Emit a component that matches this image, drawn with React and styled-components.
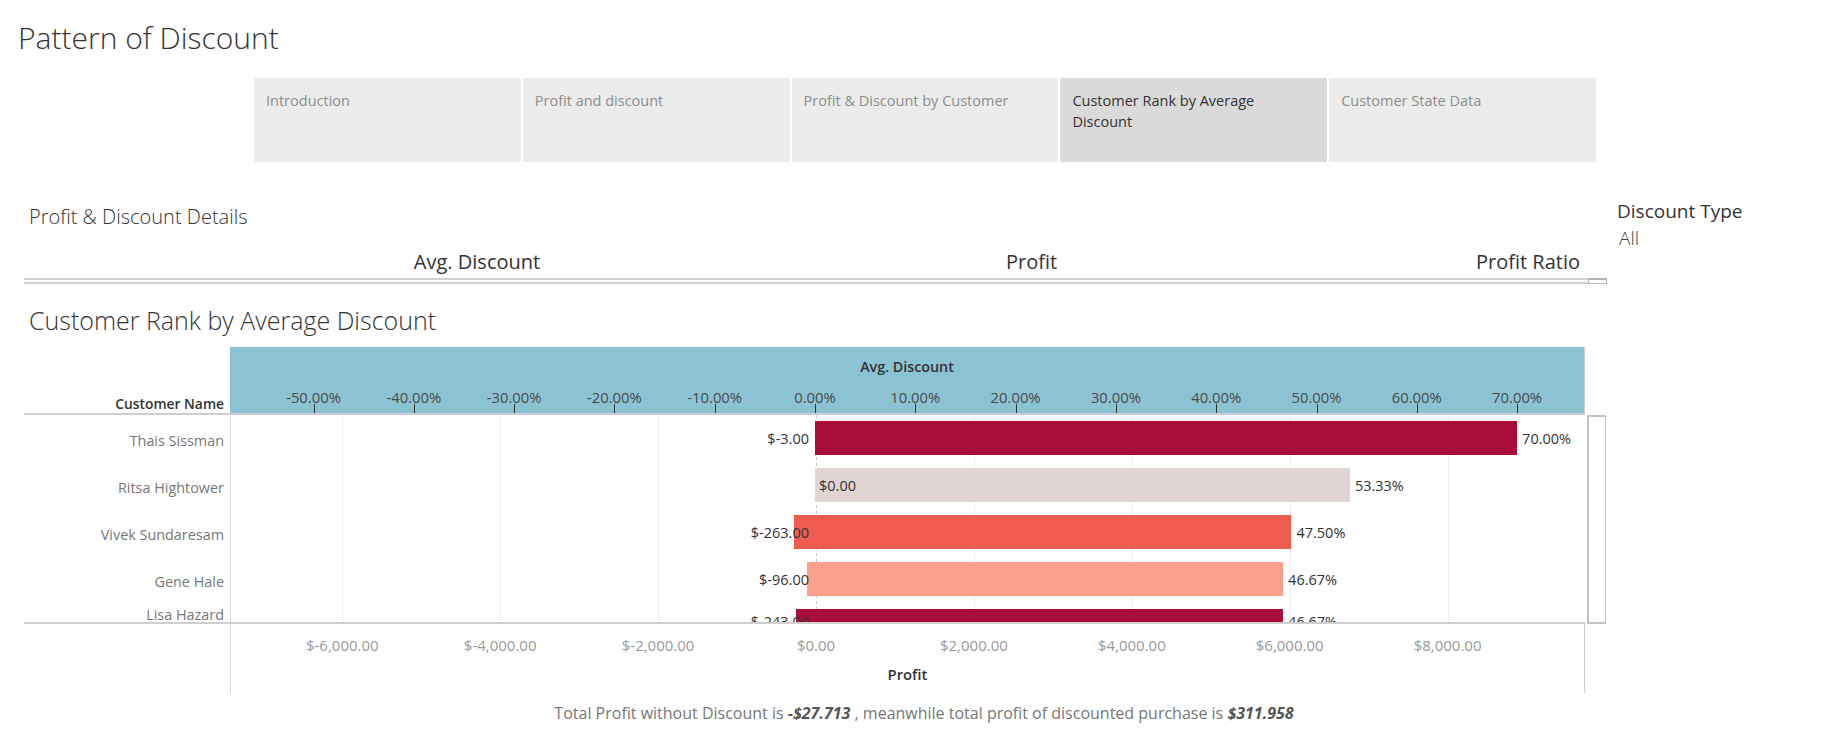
import styled, { createGlobalStyle } from 'styled-components';

const GlobalStyle = createGlobalStyle`
  html, body {
    margin: 0;
    padding: 0;
    background: #fff;
  }
  body {
    font-family: 'Open Sans', 'Noto Sans', sans-serif;
    color: #333;
  }
`;

// chart scale, in px inside the plot column
const ZERO = 585;
const PER_PCT = 10.03;
const PER_DOLLAR = 157.9 / 2000;
const PLOT_W = 1355;

const pctX = (d) => ZERO + d * PER_PCT;
const profitX = (p) => ZERO + p * PER_DOLLAR;

const customers = [
  { name: 'Thais Sissman', profit: -3, disc: 70, color: '#a90e3a', label: '$-3.00', pct: '70.00%' },
  { name: 'Ritsa Hightower', profit: 0, disc: 53.33, color: '#e0d5d3', label: '$0.00', pct: '53.33%' },
  { name: 'Vivek Sundaresam', profit: -263, disc: 47.5, color: '#f05d50', label: '$-263.00', pct: '47.50%' },
  { name: 'Gene Hale', profit: -96, disc: 46.67, color: '#fca08b', label: '$-96.00', pct: '46.67%' },
  { name: 'Lisa Hazard', profit: -243, disc: 46.67, color: '#a90e3a', label: '$-243.00', pct: '46.67%' },
];

const discTicks = [-50, -40, -30, -20, -10, 0, 10, 20, 30, 40, 50, 60, 70];
const profitTicks = [-6000, -4000, -2000, 0, 2000, 4000, 6000, 8000];

const tabs = [
  'Introduction',
  'Profit and discount',
  'Profit & Discount by Customer',
  'Customer Rank by Average Discount',
  'Customer State Data',
];

const Page = styled.div`
  width: 1848px;
  height: 743px;
  overflow: hidden;
  display: flex;
  flex-direction: column;
`;

const Title = styled.h1`
  margin: 21px 0 0 18px;
  font-size: 30px;
  font-weight: 300;
  line-height: 34px;
  color: #333;
`;

const TabBar = styled.nav`
  margin: 23px 0 0 254px;
  width: 1342px;
  height: 84px;
  display: grid;
  grid-template-columns: repeat(5, 1fr);
  gap: 2px;
`;

const Tab = styled.div`
  background: ${({ $active }) => ($active ? '#dadada' : '#ececec')};
  color: ${({ $active }) => ($active ? '#333' : '#8e8e8e')};
  padding: 12px 30px 0 12px;
  font-size: 14.5px;
  line-height: 21px;
`;

const Main = styled.div`
  margin-top: 39px;
  display: flex;
  align-items: flex-start;
`;

const Dashboard = styled.section`
  margin-left: 24px;
  width: 1583px;
  display: flex;
  flex-direction: column;
`;

const SectionHeading = styled.h2`
  margin: 4px 0 0 5px;
  font-size: 20px;
  font-weight: 300;
  line-height: 24px;
  color: #333;
`;

const MeasureHeader = styled.div`
  height: 49px;
  display: grid;
  grid-template-columns: 906px 203px 1fr;
  align-items: end;
  padding: 0 27px 3px 0;
  box-sizing: border-box;
  font-size: 20px;
  font-weight: 500;
  line-height: 26px;
  color: #333;
`;

const Measure = styled.span`
  text-align: ${({ $align }) => $align || 'center'};
`;

const RuleRow = styled.div`
  display: flex;
  height: 6px;
`;

const RuleLines = styled.div`
  flex: 1;
  border-top: 2px solid #d2d2d2;
  border-bottom: 2px solid #d2d2d2;
  box-sizing: border-box;
`;

const RuleStub = styled.div`
  width: 19px;
  border: 1px solid #b4b4b4;
  border-top-width: 2px;
  box-sizing: border-box;
`;

const ChartTitle = styled.h2`
  margin: 21px 0 0 5px;
  font-size: 25px;
  font-weight: 300;
  line-height: 30px;
  color: #333;
`;

const Chart = styled.div`
  margin-top: 12px;
  display: grid;
  grid-template-columns: 206px ${PLOT_W}px 2px 19px;
  grid-template-rows: 68px 209px 69px;
`;

const NameHeader = styled.div`
  border-bottom: 2px solid #cfcfcf;
  display: flex;
  align-items: flex-end;
  justify-content: flex-end;
  padding: 0 6px 0 0;
  font-size: 13.8px;
  font-weight: 600;
  line-height: 18px;
  color: #333;
`;

const AxisHeader = styled.div`
  position: relative;
  background: #8cc3d3;
  border-bottom: 2px solid #cfcfcf;
  border-right: 1px solid #cfcfcf;
`;

const AxisTitle = styled.div`
  padding-top: 10px;
  text-align: center;
  font-size: 14.3px;
  font-weight: 600;
  line-height: 20px;
  color: #333;
`;

const HeaderTickLabel = styled.span`
  position: absolute;
  top: 41px;
  transform: translateX(-50%);
  font-size: 14.8px;
  line-height: 18px;
  color: #4a4a4a;
  white-space: nowrap;
`;

const HeaderTick = styled.span`
  position: absolute;
  bottom: 0;
  width: 1px;
  height: 9px;
  background: #333;
`;

const Body = styled.div`
  grid-column: 1 / 3;
  position: relative;
  overflow: hidden;
  border-bottom: 2px solid #cfcfcf;
`;

const GridLayer = styled.svg`
  position: absolute;
  top: 0;
  left: 206px;
  border-left: 1px solid #d6d6d6;
  border-right: 1px solid #cfcfcf;
`;

const Row = styled.div`
  position: relative;
  display: grid;
  grid-template-columns: 206px 1fr;
  height: 47px;
`;

const Name = styled.div`
  display: flex;
  align-items: ${({ $top }) => ($top ? 'flex-start' : 'center')};
  justify-content: flex-end;
  padding: ${({ $top }) => ($top ? '2px 6px 0 0' : '4px 6px 0 0')};
  font-size: 14.4px;
  color: #777;
`;

const Plot = styled.div`
  position: relative;
`;

const Bar = styled.div`
  position: absolute;
  top: 6px;
  height: 34px;
  background: ${({ $color }) => $color};
`;

const BarLabel = styled.span`
  position: absolute;
  top: ${({ $raised }) => ($raised ? '2px' : '7px')};
  line-height: 34px;
  font-size: 14.5px;
  color: #333;
  white-space: nowrap;
`;

const ScrollTrack = styled.div`
  grid-column: 4;
  border: 2px solid #c2c2c2;
  border-right-width: 1px;
  background: #fff;
`;

const ProfitAxis = styled.div`
  grid-column: 2;
  position: relative;
  border-left: 1px solid #d6d6d6;
  border-right: 1px solid #cfcfcf;
`;

const ProfitTickLabel = styled.span`
  position: absolute;
  top: 11px;
  transform: translateX(-50%);
  font-size: 15px;
  line-height: 20px;
  color: #9a9a9a;
  white-space: nowrap;
`;

const ProfitTitle = styled.div`
  position: absolute;
  top: 40px;
  left: 0;
  right: 0;
  text-align: center;
  font-size: 14.8px;
  font-weight: 600;
  line-height: 20px;
  color: #333;
`;

const Filter = styled.aside`
  margin: -2px 0 0 10px;
  display: flex;
  flex-direction: column;
`;

const FilterTitle = styled.div`
  font-size: 19px;
  font-weight: 500;
  line-height: 24px;
  color: #333;
`;

const FilterValue = styled.div`
  margin: 3px 0 0 2px;
  font-size: 19px;
  font-weight: 300;
  line-height: 24px;
  color: #444;
`;

const Footer = styled.p`
  margin: 10px 0 0;
  text-align: center;
  font-size: 16px;
  line-height: 20px;
  color: #777;
`;

const Amount = styled.em`
  font-weight: 700;
  color: #555;
`;

const CustomerRow = ({ row, last }) => {
  const left = Math.min(profitX(row.profit), ZERO);
  const right = pctX(row.disc);
  return (
    <Row>
      <Name $top={last}>{row.name}</Name>
      <Plot>
        <Bar $color={row.color} style={{ left, width: right - left }} />
        {row.profit < 0 ? (
          <BarLabel $raised={last} style={{ right: PLOT_W - (ZERO - 6) }}>
            {row.label}
          </BarLabel>
        ) : (
          <BarLabel $raised={last} style={{ left: ZERO + 4 }}>
            {row.label}
          </BarLabel>
        )}
        <BarLabel $raised={last} style={{ left: right + 5 }}>
          {row.pct}
        </BarLabel>
      </Plot>
    </Row>
  );
};

const App = () => {
  return (
    <Page>
      <GlobalStyle />
      <Title>Pattern of Discount</Title>
      <TabBar>
        {tabs.map((t, i) => (
          <Tab key={t} $active={i === 3}>
            {t}
          </Tab>
        ))}
      </TabBar>
      <Main>
        <Dashboard>
          <SectionHeading>Profit &amp; Discount Details</SectionHeading>
          <MeasureHeader>
            <Measure>Avg. Discount</Measure>
            <Measure>Profit</Measure>
            <Measure $align="right">Profit Ratio</Measure>
          </MeasureHeader>
          <RuleRow>
            <RuleLines />
            <RuleStub />
          </RuleRow>
          <ChartTitle>Customer Rank by Average Discount</ChartTitle>
          <Chart>
            <NameHeader>Customer Name</NameHeader>
            <AxisHeader>
              <AxisTitle>Avg. Discount</AxisTitle>
              {discTicks.map((d) => (
                <HeaderTickLabel key={d} style={{ left: pctX(d) }}>
                  {d.toFixed(2)}%
                </HeaderTickLabel>
              ))}
              {discTicks.map((d) => (
                <HeaderTick key={d} style={{ left: Math.round(pctX(d)) }} />
              ))}
            </AxisHeader>
            <div />
            <div />
            <Body>
              <GridLayer width={PLOT_W} height={209}>
                {profitTicks.map((p) => (
                  <line
                    key={p}
                    x1={Math.round(profitX(p)) + 0.5}
                    x2={Math.round(profitX(p)) + 0.5}
                    y1={0}
                    y2={209}
                    stroke={p === 0 ? '#c8c8c8' : '#efefef'}
                    strokeDasharray={p === 0 ? '3 3' : undefined}
                  />
                ))}
              </GridLayer>
              {customers.map((c, i) => (
                <CustomerRow key={c.name} row={c} last={i === customers.length - 1} />
              ))}
            </Body>
            <div />
            <ScrollTrack />
            <div />
            <ProfitAxis>
              {profitTicks.map((p) => (
                <ProfitTickLabel key={p} style={{ left: profitX(p) }}>
                  ${p < 0 ? '-' : ''}
                  {Math.abs(p).toLocaleString('en-US', { minimumFractionDigits: 2 })}
                </ProfitTickLabel>
              ))}
              <ProfitTitle>Profit</ProfitTitle>
            </ProfitAxis>
          </Chart>
        </Dashboard>
        <Filter>
          <FilterTitle>Discount Type</FilterTitle>
          <FilterValue>All</FilterValue>
        </Filter>
      </Main>
      <Footer>
        Total Profit without Discount is <Amount>-$27.713</Amount> , meanwhile total profit of
        discounted purchase is <Amount>$311.958</Amount>
      </Footer>
    </Page>
  );
};

export default App;
